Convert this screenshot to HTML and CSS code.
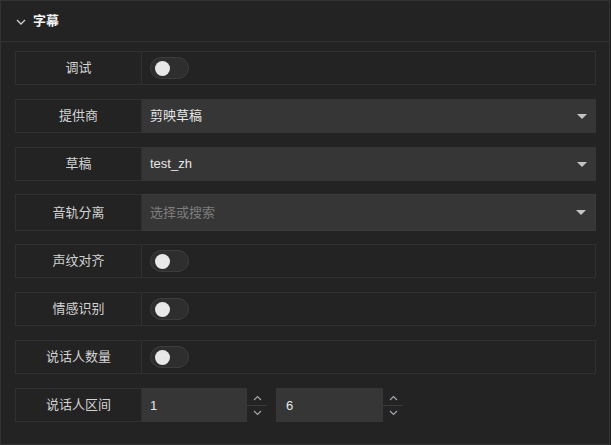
FILE: index.html
```html
<!DOCTYPE html>
<html lang="zh">
<head>
<meta charset="utf-8">
<title>字幕</title>
<link rel="stylesheet" href="styles.css">
</head>
<body>
<div class="panel">
  <div class="header">
    <svg class="chev" width="10" height="6" viewBox="0 0 10 6"><path d="M1 1 L5 5 L9 1" fill="none" stroke="#cfcfcf" stroke-width="1.3"/></svg>
    <span class="title">字幕</span>
  </div>
  <div class="body">
    <div class="row boxed">
      <div class="label">调试</div>
      <div class="ctrl"><span class="switch"><span class="knob"></span></span></div>
    </div>
    <div class="row">
      <div class="label">提供商</div>
      <div class="select"><span class="value">剪映草稿</span><span class="arrow"></span></div>
    </div>
    <div class="row">
      <div class="label">草稿</div>
      <div class="select"><span class="value">test_zh</span><span class="arrow"></span></div>
    </div>
    <div class="row tall">
      <div class="label">音轨分离</div>
      <div class="select bordered"><span class="placeholder">选择或搜索</span><span class="arrow"></span></div>
    </div>
    <div class="row boxed">
      <div class="label">声纹对齐</div>
      <div class="ctrl"><span class="switch"><span class="knob"></span></span></div>
    </div>
    <div class="row boxed">
      <div class="label">情感识别</div>
      <div class="ctrl"><span class="switch"><span class="knob"></span></span></div>
    </div>
    <div class="row boxed">
      <div class="label">说话人数量</div>
      <div class="ctrl"><span class="switch"><span class="knob"></span></span></div>
    </div>
    <div class="row">
      <div class="label">说话人区间</div>
      <div class="num first"><span class="numval">1</span></div>
      <div class="spin">
        <svg class="up" width="9" height="6" viewBox="0 0 9 6"><path d="M1 5 L4.5 1.5 L8 5" fill="none" stroke="#a6acb4" stroke-width="1.1"/></svg>
        <span class="divider"></span>
        <svg class="down" width="9" height="6" viewBox="0 0 9 6"><path d="M1 1 L4.5 4.5 L8 1" fill="none" stroke="#a6acb4" stroke-width="1.1"/></svg>
      </div>
      <div class="num second"><span class="numval">6</span></div>
      <div class="spin">
        <svg class="up" width="9" height="6" viewBox="0 0 9 6"><path d="M1 5 L4.5 1.5 L8 5" fill="none" stroke="#a6acb4" stroke-width="1.1"/></svg>
        <span class="divider"></span>
        <svg class="down" width="9" height="6" viewBox="0 0 9 6"><path d="M1 1 L4.5 4.5 L8 1" fill="none" stroke="#a6acb4" stroke-width="1.1"/></svg>
      </div>
    </div>
  </div>
</div>
</body>
</html>
```
FILE: styles.css
```css
html, body {
  margin: 0;
  padding: 0;
  background: #1d1d1d;
}
body {
  width: 611px;
  height: 445px;
  overflow: hidden;
  font-family: "Liberation Sans", "Noto Sans CJK SC", sans-serif;
  font-size: 13px;
}
.panel {
  width: 610px;
  height: 445px;
  box-sizing: border-box;
  background: #232323;
  border: 1px solid #333333;
}
.header {
  height: 40px;
  border-bottom: 1px solid #333333;
  display: flex;
  align-items: center;
  padding-left: 15px;
  gap: 7px;
}
.chev {
  display: block;
  margin-top: 1px;
}
.title {
  color: #f2f2f2;
  font-weight: bold;
  font-size: 13px;
  line-height: 16px;
}
.body {
  padding: 9px 13px 0 14px;
}
.row {
  display: flex;
  height: 34px;
  margin-bottom: 14px;
  box-sizing: border-box;
}
.row.tall {
  height: 37px;
  margin-top: -1px;
  margin-bottom: 13px;
}
.label {
  width: 127px;
  flex: none;
  box-sizing: border-box;
  border: 1px solid #303030;
  display: flex;
  align-items: center;
  justify-content: center;
  color: #d2d2d2;
  line-height: 16px;
}
.row.boxed .ctrl {
  flex: 1;
  border: 1px solid #303030;
  border-left: none;
  display: flex;
  align-items: center;
  padding-left: 8px;
}
.switch {
  width: 39px;
  height: 22px;
  box-sizing: border-box;
  border: 1px solid #3d3d3d;
  background: #2e2e2e;
  border-radius: 11px;
  display: flex;
  align-items: center;
  padding-left: 4px;
}
.knob {
  width: 15px;
  height: 15px;
  border-radius: 50%;
  background: #e8e8e8;
}
.select {
  flex: 1;
  background: #363636;
  display: flex;
  align-items: center;
  justify-content: space-between;
  padding: 0 9px 0 8px;
  color: #e6e6e6;
  line-height: 16px;
}
.select.bordered {
  border: 1px solid #3a3a3a;
  border-left: none;
  padding-right: 9px;
}
.placeholder {
  color: #7d7d7d;
}
.arrow {
  width: 0;
  height: 0;
  border-left: 5px solid transparent;
  border-right: 5px solid transparent;
  border-top: 5px solid #c4c4c4;
}
.num {
  background: #363636;
  display: flex;
  align-items: center;
  padding-left: 8px;
  box-sizing: border-box;
  color: #e6e6e6;
  font-size: 13px;
}
.num.first {
  width: 105px;
}
.num.second {
  width: 107px;
  margin-left: 9px;
  padding-left: 10px;
}
.spin {
  width: 20px;
  display: flex;
  flex-direction: column;
  align-items: center;
  justify-content: center;
}
.spin .up {
  display: block;
  margin-bottom: 4px;
}
.spin .divider {
  display: block;
  width: 20px;
  height: 1px;
  background: #3a3a3a;
}
.spin .down {
  display: block;
  margin-top: 4px;
}
```
